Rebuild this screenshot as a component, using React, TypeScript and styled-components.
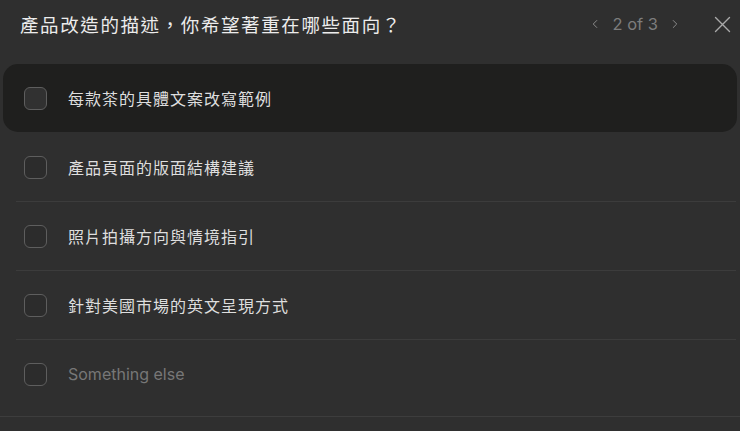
import styled, { createGlobalStyle } from "styled-components";

const GlobalStyle = createGlobalStyle`
  html, body {
    margin: 0;
    background: #2f2f2f;
  }
  body {
    font-family: Inter, "Noto Sans CJK TC", "Noto Sans", sans-serif;
    -webkit-font-smoothing: antialiased;
  }
`;

const Panel = styled.div`
  width: 740px;
  height: 431px;
  background: #2f2f2f;
  color: #ececec;
  overflow: hidden;
  display: flex;
  flex-direction: column;
`;

const Header = styled.header`
  height: 48px;
  display: flex;
  align-items: center;
  padding: 0 4px 0 20px;
`;

const Title = styled.h2`
  flex: 1;
  margin: 0;
  font-size: 18.5px;
  font-weight: 400;
  color: #ececec;
  letter-spacing: 1.6px;
`;

const Pager = styled.div`
  display: flex;
  align-items: center;
  gap: 10px;
  color: #7d7d7d;
  font-size: 16.5px;
  margin-right: 26px;
`;

const IconButton = styled.button`
  background: none;
  border: none;
  padding: 0;
  display: flex;
  align-items: center;
  justify-content: center;
  color: #8a8a8a;
  cursor: pointer;
`;

const CloseButton = styled(IconButton)`
  color: #a9a9a9;
  width: 28px;
  height: 28px;
`;

const List = styled.ul`
  list-style: none;
  margin: 0;
  padding: 16px 3px 0;
  flex: 0 0 auto;
`;

const Row = styled.li<{ $active?: boolean; $last?: boolean }>`
  height: 68px;
  display: flex;
  align-items: center;
  gap: 21px;
  padding: 0 21px;
  position: relative;
  border-radius: ${(p) => (p.$active ? "15px" : "0")};
  background: ${(p) => (p.$active ? "#1f1f1e" : "transparent")};
  margin-bottom: 1px;

  &::after {
    content: "";
    position: absolute;
    left: 13px;
    right: 1px;
    bottom: -1px;
    height: 1px;
    background: ${(p) => (p.$last ? "transparent" : "#3c3c3c")};
    display: ${(p) => (p.$active ? "none" : "block")};
  }
`;

const Box = styled.span<{ $active?: boolean }>`
  width: 21px;
  height: 21px;
  border: 1.5px solid #5e5e5e;
  border-radius: 6px;
  background: ${(p) => (p.$active ? "#313131" : "#2c2c2c")};
  flex: 0 0 auto;
`;

const Label = styled.span<{ $muted?: boolean }>`
  font-size: 16px;
  color: ${(p) => (p.$muted ? "#777777" : "#dedede")};
  letter-spacing: ${(p) => (p.$muted ? "0" : "1px")};
`;

const Footer = styled.div`
  margin-top: 7px;
  border-top: 1px solid #3d3d3d;
  flex: 1;
`;

const Chevron = ({ dir }: { dir: "left" | "right" }) => (
  <svg width="14" height="14" viewBox="0 0 24 24" fill="none" stroke="currentColor" strokeWidth="1.7" strokeLinecap="round" strokeLinejoin="round">
    <path d={dir === "left" ? "M15 6l-6 6 6 6" : "M9 6l6 6-6 6"} />
  </svg>
);

const options = [
  "每款茶的具體文案改寫範例",
  "產品頁面的版面結構建議",
  "照片拍攝方向與情境指引",
  "針對美國市場的英文呈現方式",
];

export default function App() {
  return (
    <Panel>
      <GlobalStyle />
      <Header>
        <Title>產品改造的描述，你希望著重在哪些面向？</Title>
        <Pager>
          <IconButton>
            <Chevron dir="left" />
          </IconButton>
          <span>2 of 3</span>
          <IconButton>
            <Chevron dir="right" />
          </IconButton>
        </Pager>
        <CloseButton>
          <svg width="21" height="21" viewBox="0 0 24 24" fill="none" stroke="currentColor" strokeWidth="1.6" strokeLinecap="round">
            <path d="M4 4l16 16M20 4L4 20" />
          </svg>
        </CloseButton>
      </Header>
      <List>
        {options.map((o, i) => (
          <Row key={o} $active={i === 0}>
            <Box $active={i === 0} />
            <Label>{o}</Label>
          </Row>
        ))}
        <Row $last>
          <Box />
          <Label $muted>Something else</Label>
        </Row>
      </List>
      <Footer />
    </Panel>
  );
}
